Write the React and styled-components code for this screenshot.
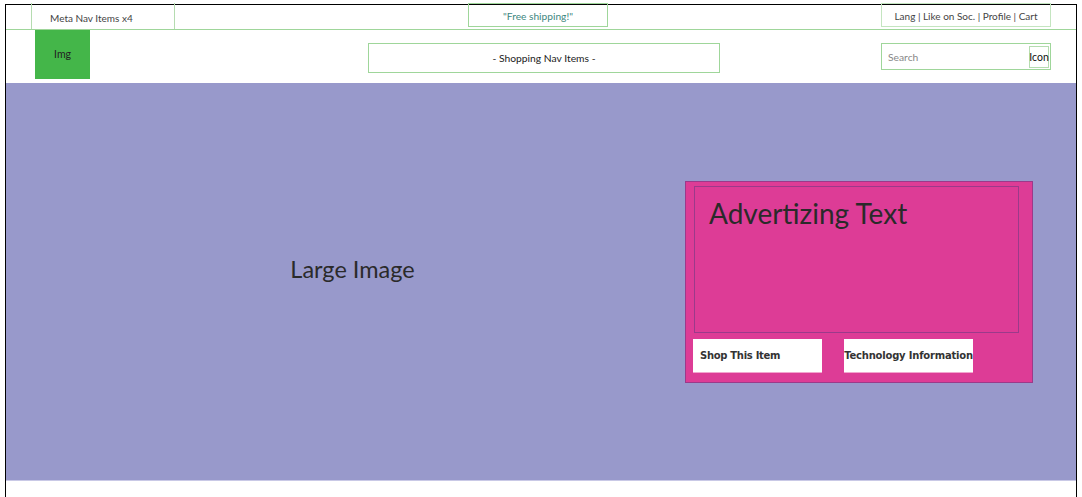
import React from "react";
import styled, { createGlobalStyle } from "styled-components";

const Global = createGlobalStyle`
  html, body { margin: 0; padding: 0; background: #fff; }
  body { font-family: Lato, "Open Sans", sans-serif; color: #333; }
`;

const GREEN = "#9fd69a";

const Page = styled.div`
  padding: 4px 5px 0 5px;
  height: 497px;
  box-sizing: border-box;
  overflow: hidden;
`;

const Frame = styled.div`
  border: 1px solid #000;
  border-bottom: none;
  width: 1072px;
  height: 493px;
  box-sizing: border-box;
  display: flex;
  flex-direction: column;
`;

const Row = styled.div`
  display: grid;
  grid-template-columns: 1fr auto 1fr;
  align-items: start;
  flex-shrink: 0;
`;

const TopBar = styled(Row)`
  height: 24px;
  border-bottom: 1px solid ${GREEN};
  align-items: stretch;
`;

const MetaNav = styled.div`
  justify-self: start;
  margin-left: 25px;
  margin-top: -2px;
  width: 144px;
  box-sizing: border-box;
  border-left: 1px solid #b5dcb0;
  border-right: 1px solid #b5dcb0;
  display: flex;
  align-items: center;
  padding: 4px 0 0 18px;
  font-size: 10px;
  color: #444;
`;

const Promo = styled.div`
  margin-top: -2px;
  height: 24px;
  width: 140px;
  box-sizing: border-box;
  border: 1px solid ${GREEN};
  display: flex;
  align-items: center;
  justify-content: center;
  padding-top: 2px;
  font-size: 10.2px;
  color: #3d8780;
  transform: translateX(-3px);
`;

const Utility = styled.div`
  justify-self: end;
  margin-right: 25px;
  margin-top: -2px;
  height: 24px;
  width: 170px;
  box-sizing: border-box;
  border: 1px solid #c4e5c0;
  display: flex;
  align-items: center;
  justify-content: center;
  padding-top: 2px;
  font-size: 10px;
  color: #444;
`;

const Header = styled(Row)`
  height: 53px;
`;

const Logo = styled.div`
  justify-self: start;
  margin-left: 29px;
  width: 55px;
  height: 49px;
  background: #44b649;
  display: flex;
  align-items: center;
  justify-content: center;
  font-size: 10.5px;
  color: #222;
  padding-bottom: 2px;
  box-sizing: border-box;
`;

const ShopNav = styled.div`
  margin-top: 13px;
  width: 352px;
  height: 30px;
  box-sizing: border-box;
  border: 1px solid ${GREEN};
  display: flex;
  align-items: center;
  justify-content: center;
  font-size: 10.3px;
  color: #222;
  transform: translateX(3px);
`;

const SearchBox = styled.div`
  justify-self: end;
  margin-top: 13px;
  margin-right: 25px;
  width: 170px;
  height: 27px;
  box-sizing: border-box;
  border: 1px solid ${GREEN};
  display: flex;
  align-items: center;
  justify-content: space-between;
  padding: 0 1px 0 6px;
`;

const SearchText = styled.span`
  font-size: 10.3px;
  color: #888;
`;

const IconBox = styled.span`
  height: 22px;
  width: 20px;
  box-sizing: border-box;
  border: 1px solid #b5dcb0;
  display: flex;
  align-items: center;
  justify-content: center;
  font-size: 10.5px;
  color: #111;
`;

const Hero = styled.div`
  height: 397px;
  background: #9899cb;
  display: flex;
  align-items: center;
  flex-shrink: 0;
  border-bottom: 1px solid #c9c9e6;
`;

const HeroLabel = styled.div`
  flex: 1;
  text-align: center;
  font-size: 23.5px;
  color: #2a2a2a;
  margin-bottom: 25px;
  padding-left: 14px;
`;

const AdCard = styled.div`
  margin-right: 43px;
  width: 348px;
  height: 202px;
  box-sizing: border-box;
  background: #dd3c96;
  border: 1px solid #9b3a8a;
  padding: 4px 13px 9px 8px;
  display: flex;
  flex-direction: column;
`;

const AdText = styled.div`
  height: 147px;
  box-sizing: border-box;
  border: 1px solid #9b3a8a;
  padding: 11px 0 0 14px;
  font-size: 28px;
  color: #2a2a2a;
  line-height: 1.1;
`;

const Actions = styled.div`
  margin-top: 6px;
  display: flex;
  gap: 22px;
  margin-left: -1px;
`;

const ActionButton = styled.div`
  width: 129px;
  height: 34px;
  box-sizing: border-box;
  background: #fff;
  border-bottom: 1px solid #f2a6cf;
  display: flex;
  align-items: center;
  justify-content: ${(p) => (p.$center ? "center" : "flex-start")};
  padding-left: ${(p) => (p.$center ? "0" : "7px")};
  font-family: "DejaVu Sans", Verdana, sans-serif;
  font-weight: bold;
  font-size: 10px;
  letter-spacing: ${(p) => (p.$center ? "-0.2px" : "-0.3px")};
  color: #333;
  white-space: nowrap;
`;

export default function App() {
  return (
    <>
      <Global />
      <Page>
        <Frame>
          <TopBar>
            <MetaNav>Meta Nav Items x4</MetaNav>
            <Promo>"Free shipping!"</Promo>
            <Utility>Lang | Like on Soc. | Profile | Cart</Utility>
          </TopBar>
          <Header>
            <Logo>Img</Logo>
            <ShopNav>- Shopping Nav Items -</ShopNav>
            <SearchBox>
              <SearchText>Search</SearchText>
              <IconBox>Icon</IconBox>
            </SearchBox>
          </Header>
          <Hero>
            <HeroLabel>Large Image</HeroLabel>
            <AdCard>
              <AdText>Advertizing Text</AdText>
              <Actions>
                <ActionButton>Shop This Item</ActionButton>
                <ActionButton $center>Technology Information</ActionButton>
              </Actions>
            </AdCard>
          </Hero>
        </Frame>
      </Page>
    </>
  );
}
